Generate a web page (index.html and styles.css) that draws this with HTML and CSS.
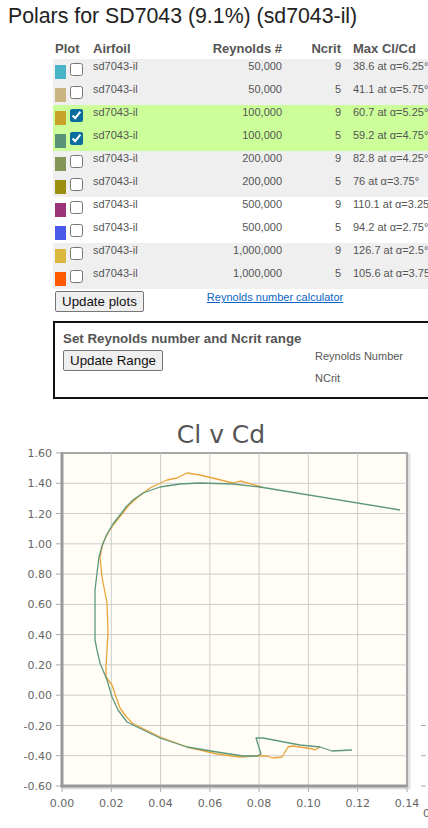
FILE: index.html
```html
<!DOCTYPE html>
<html>
<head>
<meta charset="utf-8">
<title>Polars for SD7043</title>
<link rel="stylesheet" href="styles.css">
</head>
<body>
<div class="page">
  <h1 class="title">Polars for SD7043 (9.1%) (sd7043-il)</h1>
  <table class="polars">
    <colgroup>
      <col class="w-plot"><col class="w-airfoil"><col class="w-re"><col class="w-nc"><col class="w-max">
    </colgroup>
    <thead>
      <tr><th class="c-plot">Plot</th><th class="c-airfoil">Airfoil</th><th class="c-re">Reynolds #</th><th class="c-nc">Ncrit</th><th class="c-max">Max Cl/Cd</th></tr>
    </thead>
    <tbody>
      <tr class="r-gray"><td class="c-plot"><div class="plot"><span class="sw sw1"></span><input type="checkbox"></div></td><td class="c-airfoil">sd7043-il</td><td class="c-re">50,000</td><td class="c-nc">9</td><td class="c-max">38.6 at α=6.25°</td></tr>
      <tr class="r-gray"><td class="c-plot"><div class="plot"><span class="sw sw2"></span><input type="checkbox"></div></td><td class="c-airfoil">sd7043-il</td><td class="c-re">50,000</td><td class="c-nc">5</td><td class="c-max">41.1 at α=5.75°</td></tr>
      <tr class="r-green"><td class="c-plot"><div class="plot"><span class="sw sw3"></span><input type="checkbox" checked></div></td><td class="c-airfoil">sd7043-il</td><td class="c-re">100,000</td><td class="c-nc">9</td><td class="c-max">60.7 at α=5.25°</td></tr>
      <tr class="r-green"><td class="c-plot"><div class="plot"><span class="sw sw4"></span><input type="checkbox" checked></div></td><td class="c-airfoil">sd7043-il</td><td class="c-re">100,000</td><td class="c-nc">5</td><td class="c-max">59.2 at α=4.75°</td></tr>
      <tr class="r-gray"><td class="c-plot"><div class="plot"><span class="sw sw5"></span><input type="checkbox"></div></td><td class="c-airfoil">sd7043-il</td><td class="c-re">200,000</td><td class="c-nc">9</td><td class="c-max">82.8 at α=4.25°</td></tr>
      <tr class="r-gray"><td class="c-plot"><div class="plot"><span class="sw sw6"></span><input type="checkbox"></div></td><td class="c-airfoil">sd7043-il</td><td class="c-re">200,000</td><td class="c-nc">5</td><td class="c-max">76 at α=3.75°</td></tr>
      <tr class="r-white"><td class="c-plot"><div class="plot"><span class="sw sw7"></span><input type="checkbox"></div></td><td class="c-airfoil">sd7043-il</td><td class="c-re">500,000</td><td class="c-nc">9</td><td class="c-max">110.1 at α=3.25°</td></tr>
      <tr class="r-white"><td class="c-plot"><div class="plot"><span class="sw sw8"></span><input type="checkbox"></div></td><td class="c-airfoil">sd7043-il</td><td class="c-re">500,000</td><td class="c-nc">5</td><td class="c-max">94.2 at α=2.75°</td></tr>
      <tr class="r-gray"><td class="c-plot"><div class="plot"><span class="sw sw9"></span><input type="checkbox"></div></td><td class="c-airfoil">sd7043-il</td><td class="c-re">1,000,000</td><td class="c-nc">9</td><td class="c-max">126.7 at α=2.5°</td></tr>
      <tr class="r-gray"><td class="c-plot"><div class="plot"><span class="sw sw10"></span><input type="checkbox"></div></td><td class="c-airfoil">sd7043-il</td><td class="c-re">1,000,000</td><td class="c-nc">5</td><td class="c-max">105.6 at α=3.75°</td></tr>
    </tbody>
  </table>

  <div class="actions">
    <button class="btn">Update plots</button>
    <a class="calc-link" href="#">Reynolds number calculator</a>
  </div>

  <div class="range-box">
    <div class="range-title">Set Reynolds number and Ncrit range</div>
    <div class="range-row">
      <div class="range-left"><button class="btn">Update Range</button></div>
      <div class="range-labels">
        <div class="range-label">Reynolds Number</div>
        <div class="range-label">NCrit</div>
      </div>
    </div>
  </div>

  <svg class="chart" width="440" height="420" viewBox="0 408 440 420" xmlns="http://www.w3.org/2000/svg">
    <text x="221" y="443" text-anchor="middle" font-family="DejaVu Sans, sans-serif" font-size="25" fill="#555">Cl v Cd</text>
    <rect x="64" y="455" width="345" height="333" fill="none" stroke="rgba(0,0,0,0.12)" stroke-width="3"/>
    <rect x="62" y="453" width="345" height="333" fill="#fffdf5" stroke="#a8a8a8" stroke-width="2"/>
    <g stroke="#cccccc" stroke-width="1">
      <line x1="111.3" y1="453" x2="111.3" y2="786"/>
      <line x1="160.6" y1="453" x2="160.6" y2="786"/>
      <line x1="209.9" y1="453" x2="209.9" y2="786"/>
      <line x1="259.1" y1="453" x2="259.1" y2="786"/>
      <line x1="308.4" y1="453" x2="308.4" y2="786"/>
      <line x1="357.7" y1="453" x2="357.7" y2="786"/>
      <line x1="62" y1="483.3" x2="407" y2="483.3"/>
      <line x1="62" y1="513.5" x2="407" y2="513.5"/>
      <line x1="62" y1="543.8" x2="407" y2="543.8"/>
      <line x1="62" y1="574.1" x2="407" y2="574.1"/>
      <line x1="62" y1="604.4" x2="407" y2="604.4"/>
      <line x1="62" y1="634.6" x2="407" y2="634.6"/>
      <line x1="62" y1="664.9" x2="407" y2="664.9"/>
      <line x1="62" y1="695.2" x2="407" y2="695.2"/>
      <line x1="62" y1="725.5" x2="407" y2="725.5"/>
      <line x1="62" y1="755.7" x2="407" y2="755.7"/>
    </g>
    <g stroke="#999" stroke-width="3">
      <line x1="62" y1="452" x2="62" y2="787.5"/>
      <line x1="60.5" y1="786" x2="407.5" y2="786"/>
    </g>
    <g stroke="#aaa" stroke-width="1">
      <line x1="56" y1="453" x2="61" y2="453"/>
      <line x1="56" y1="483.3" x2="61" y2="483.3"/>
      <line x1="56" y1="513.5" x2="61" y2="513.5"/>
      <line x1="56" y1="543.8" x2="61" y2="543.8"/>
      <line x1="56" y1="574.1" x2="61" y2="574.1"/>
      <line x1="56" y1="604.4" x2="61" y2="604.4"/>
      <line x1="56" y1="634.6" x2="61" y2="634.6"/>
      <line x1="56" y1="664.9" x2="61" y2="664.9"/>
      <line x1="56" y1="695.2" x2="61" y2="695.2"/>
      <line x1="56" y1="725.5" x2="61" y2="725.5"/>
      <line x1="56" y1="755.7" x2="61" y2="755.7"/>
      <line x1="56" y1="786" x2="61" y2="786"/>
      <line x1="62" y1="788" x2="62" y2="792"/>
      <line x1="111.3" y1="788" x2="111.3" y2="792"/>
      <line x1="160.6" y1="788" x2="160.6" y2="792"/>
      <line x1="209.9" y1="788" x2="209.9" y2="792"/>
      <line x1="259.1" y1="788" x2="259.1" y2="792"/>
      <line x1="308.4" y1="788" x2="308.4" y2="792"/>
      <line x1="357.7" y1="788" x2="357.7" y2="792"/>
      <line x1="407" y1="788" x2="407" y2="792"/>
      <line x1="421" y1="725.5" x2="426" y2="725.5"/>
      <line x1="421" y1="755.7" x2="426" y2="755.7"/>
      <line x1="421" y1="786" x2="426" y2="786"/>
    </g>
    <g font-family="DejaVu Sans, sans-serif" font-size="11" fill="#666" text-anchor="end">
      <text x="52" y="457">1.60</text>
      <text x="52" y="487.3">1.40</text>
      <text x="52" y="517.5">1.20</text>
      <text x="52" y="547.8">1.00</text>
      <text x="52" y="578.1">0.80</text>
      <text x="52" y="608.4">0.60</text>
      <text x="52" y="638.6">0.40</text>
      <text x="52" y="668.9">0.20</text>
      <text x="52" y="699.2">0.00</text>
      <text x="52" y="729.5">-0.20</text>
      <text x="52" y="759.7">-0.40</text>
      <text x="52" y="790">-0.60</text>
    </g>
    <g font-family="DejaVu Sans, sans-serif" font-size="11" fill="#666" text-anchor="middle">
      <text x="62" y="807">0.00</text>
      <text x="111.3" y="807">0.02</text>
      <text x="160.6" y="807">0.04</text>
      <text x="209.9" y="807">0.06</text>
      <text x="259.1" y="807">0.08</text>
      <text x="308.4" y="807">0.10</text>
      <text x="357.7" y="807">0.12</text>
      <text x="407" y="807">0.14</text>
    </g>
    <text x="423" y="817" font-family="DejaVu Sans, sans-serif" font-size="11" fill="#666">0</text>
    <polyline fill="none" stroke="#eaa43a" stroke-width="1.3" stroke-linejoin="round"
      points="262,487 240,481 233,483 200,475 187,473 177,478 167,480 150,488 137,498 129,505 122,514 114,524 108,533 103,543 100,557 102,577 107,603 108,633 106,667 106,677 112,685 116,697 120,708 125,715 132,723 160,737 187,747 217,754 240,757 260,756 267,756 273,758 282,757 288,747 293,746 313,749 315,750 320,747"/>
    <polyline fill="none" stroke="#5f987b" stroke-width="1.3" stroke-linejoin="round"
      points="400,510 260,487 233,484 200,483 180,484 160,487 143,493 133,500 126,507 120,515 113,524 107,534 102,546 99,557 97,573 95,590 95,607 95,640 97,650 100,663 107,680 112,697 118,710 127,722 133,725 160,738 187,747 217,752 243,756 257,756 261,754 256,738 263,738 300,745 320,747 332,751 352,750"/>
  </svg>
</div>
</body>
</html>
```

FILE: styles.css
```css
html, body {
  margin: 0;
  padding: 0;
  overflow-x: hidden;
  background: #ffffff;
}

.page {
  width: 440px;
  font-family: "Liberation Sans", Arial, sans-serif;
  color: #555;
}

.title {
  margin: 0;
  padding: 4px 0 0 8px;
  font-size: 21.3px;
  line-height: 24px;
  font-weight: normal;
  color: #222;
  white-space: nowrap;
}

.polars {
  margin: 10px 0 0 53px;
  border-collapse: collapse;
  border-spacing: 0;
  table-layout: fixed;
  width: 407px;
}

.w-plot { width: 37px; }
.w-airfoil { width: 120px; }
.w-re { width: 74px; }
.w-nc { width: 59px; }
.w-max { width: 117px; }

.polars th {
  font-size: 13px;
  line-height: 15px;
  font-weight: bold;
  color: #555;
  padding: 3px 0;
  height: 15px;
  white-space: nowrap;
}

.polars td {
  font-size: 11px;
  line-height: 13px;
  color: #555;
  height: 22px;
  padding: 1px 0 0 0;
  vertical-align: top;
  white-space: nowrap;
  overflow: hidden;
}

.c-plot { text-align: left; padding-left: 2px !important; }
.c-airfoil { text-align: left; padding-left: 3px !important; }
.c-re { text-align: right; padding-right: 2px !important; }
.c-nc { text-align: right; padding-right: 2px !important; }
.c-max { text-align: left; padding-left: 10px !important; }

.r-gray td { background: #efefef; }
.r-white td { background: #ffffff; }
.r-green td { background: #ccff99; }
.r-green td.c-plot { box-shadow: -12px 0 0 #ccff99; }

.plot {
  display: flex;
  align-items: flex-start;
}

.sw {
  display: block;
  width: 11px;
  height: 14px;
  margin-top: 5px;
}

.plot input {
  width: 13px;
  height: 13px;
  margin: 3px 0 0 4px;
  accent-color: #0a6c9c;
}

.sw1 { background: #4ab5c8; }
.sw2 { background: #c9b482; }
.sw3 { background: #c9a22a; }
.sw4 { background: #5a9478; }
.sw5 { background: #839557; }
.sw6 { background: #9a8f10; }
.sw7 { background: #9a3377; }
.sw8 { background: #4a5ae8; }
.sw9 { background: #dbb840; }
.sw10 { background: #ff5a00; }

.actions {
  display: flex;
  align-items: flex-start;
  margin: 2px 0 0 55px;
}

.btn {
  font-family: "Liberation Sans", Arial, sans-serif;
  font-size: 13.33px;
  line-height: 15px;
  color: #111;
  background: #efefef;
  border: 1px solid #767676;
  border-radius: 2px;
  padding: 2px 6px;
  height: 21px;
  margin: 0;
}

.calc-link {
  margin-left: 63px;
  margin-top: 0px;
  font-size: 11px;
  line-height: 13px;
  color: #0b63c8;
  text-decoration: underline;
}

.range-box {
  box-sizing: border-box;
  margin: 9px 0 0 53px;
  width: 460px;
  height: 78px;
  border: 2px solid #111;
  padding: 8px 0 0 8px;
}

.range-title {
  font-size: 13.33px;
  line-height: 16px;
  font-weight: bold;
  color: #555;
  white-space: nowrap;
}

.range-row {
  display: flex;
  align-items: flex-start;
  margin-top: 3px;
}

.range-left {
  width: 252px;
}

.range-labels {
  display: flex;
  flex-direction: column;
  gap: 9px;
  margin-top: 0px;
}

.range-label {
  font-size: 11px;
  line-height: 13px;
  color: #555;
  white-space: nowrap;
}

.chart {
  display: block;
  margin-top: 9px;
}
```
